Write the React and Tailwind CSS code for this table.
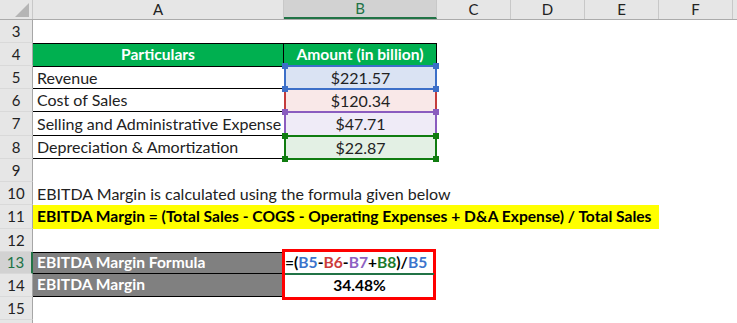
import React from "react";

const F = "font-['Lato',sans-serif]";

function RowHdr({ n, h, active }) {
  return (
    <div
      className={`${h} w-[33px] shrink-0 flex items-center justify-center text-[15px] border-b border-[#d9d9d9] ${
        active
          ? "bg-[#d2d2d2] text-[#217346] border-r-2 border-r-[#217346]"
          : "bg-[#e6e6e6] text-[#222] border-r border-r-[#a6a6a6]"
      }`}
    >
      {n}
    </div>
  );
}

function Sq({ pos, color }) {
  return <div className={`absolute w-[6px] h-[6px] ${color} ${pos}`} />;
}

function Range({ border, sq, z, children, bg }) {
  return (
    <div className={`relative w-[153px] shrink-0 h-full ${bg} ${z} flex items-center justify-center text-[16px] text-[#222]`}>
      <div className={`absolute -top-px -bottom-px left-0 right-0 border-2 ${border}`} />
      <Sq pos="-left-[2px] -top-[3px]" color={sq} />
      <Sq pos="-right-[2px] -top-[3px]" color={sq} />
      <Sq pos="-left-[2px] -bottom-[3px]" color={sq} />
      <Sq pos="-right-[2px] -bottom-[3px]" color={sq} />
      <span className="relative">{children}</span>
    </div>
  );
}

function Row({ n, h, active, children }) {
  return (
    <div className={`flex ${h} relative`}>
      <RowHdr n={n} h={h} active={active} />
      {children}
    </div>
  );
}

export default function App() {
  return (
    <div className={`w-[737px] h-[323px] overflow-hidden bg-white ${F} text-[#111]`}>
      {/* column header */}
      <div className="flex h-[20px] bg-[#e6e6e6] border-b border-[#ababab]">
        <div className="w-[33px] shrink-0 relative border-r border-[#c8c8c8]">
          <svg width="33" height="20" className="absolute inset-0">
            <polygon points="29,3 29,17 15,17" fill="#b5b5b5" />
          </svg>
        </div>
        <div className="w-[251px] shrink-0 flex items-center justify-center text-[15px] text-[#222] border-r border-[#c8c8c8]">A</div>
        <div className="w-[153px] shrink-0 flex items-center justify-center text-[15px] text-[#217346] bg-[#d2d2d2] border-b-2 border-[#217346] border-r border-r-[#c8c8c8]">B</div>
        <div className="w-[74px] shrink-0 flex items-center justify-center text-[15px] text-[#222] border-r border-[#c8c8c8]">C</div>
        <div className="w-[74px] shrink-0 flex items-center justify-center text-[15px] text-[#222] border-r border-[#c8c8c8]">D</div>
        <div className="w-[74px] shrink-0 flex items-center justify-center text-[15px] text-[#222] border-r border-[#c8c8c8]">E</div>
        <div className="w-[74px] shrink-0 flex items-center justify-center text-[15px] text-[#222] border-r border-[#c8c8c8]">F</div>
        <div className="flex-1" />
      </div>

      <Row n="3" h="h-[23px]" />

      <Row n="4" h="h-[23px]">
        <div className="w-[251px] shrink-0 bg-[#00b050] border-t border-black border-r flex items-center justify-center text-white font-bold text-[15.6px]">
          Particulars
        </div>
        <div className="w-[153px] shrink-0 bg-[#00b050] border-t border-black border-r flex items-center justify-center text-white font-bold text-[15.6px]">
          Amount (in billion)
        </div>
      </Row>

      <Row n="5" h="h-[23px]">
        <div className="w-[251px] shrink-0 border-t border-b border-black flex items-center pl-[4px] text-[16px] text-[#222]">Revenue</div>
        <Range border="border-[#3c6fc8]" sq="bg-[#3c6fc8]" z="z-30" bg="bg-[#dae3f3]">$221.57</Range>
      </Row>

      <Row n="6" h="h-[23px]">
        <div className="w-[251px] shrink-0 border-b border-black flex items-center pl-[4px] text-[16px] text-[#222]">Cost of Sales</div>
        <Range border="border-[#c43c3c]" sq="bg-transparent" z="z-10" bg="bg-[#f9e8e8]">$120.34</Range>
      </Row>

      <Row n="7" h="h-[24px]">
        <div className="w-[251px] shrink-0 border-b border-black flex items-center pl-[4px] text-[16px] text-[#222] whitespace-nowrap">Selling and Administrative Expense</div>
        <Range border="border-[#8a5cbf]" sq="bg-[#8a5cbf]" z="z-20" bg="bg-[#efebf7]">$47.71</Range>
      </Row>

      <Row n="8" h="h-[23px]">
        <div className="w-[251px] shrink-0 border-b border-black flex items-center pl-[4px] text-[16px] text-[#222]">Depreciation &amp; Amortization</div>
        <Range border="border-[#107c10]" sq="bg-[#107c10]" z="z-30" bg="bg-[#e3f0e4]">$22.87</Range>
      </Row>

      <Row n="9" h="h-[23px]" />

      <Row n="10" h="h-[23px]">
        <div className="flex items-center pl-[4px] text-[16px] text-[#222] whitespace-nowrap">
          EBITDA Margin is calculated using the formula given below
        </div>
      </Row>

      <Row n="11" h="h-[24px]">
        <div className="w-[626px] shrink-0 bg-[#ffff00] flex items-center pl-[4px] text-[15.6px] font-bold text-black whitespace-nowrap">
          EBITDA Margin = (Total Sales - COGS - Operating Expenses + D&amp;A Expense) / Total Sales
        </div>
      </Row>

      <Row n="12" h="h-[23px]" />

      <Row n="13" h="h-[22px]" active>
        <div className="w-[249px] shrink-0 bg-[#808080] border-t border-b border-black flex items-center pl-[4px] text-[15.6px] font-bold text-white">
          EBITDA Margin Formula
        </div>
        <div className="w-[155px] shrink-0 relative z-10 flex items-center pl-[3px] text-[15.6px] font-bold">
          <div className="absolute -top-[3px] left-0 right-[1px] h-[51px] border-[3px] border-[#ff0000]" />
          <div className="absolute bottom-[-1px] left-[3px] right-[3px] h-[2px] bg-[#217346]" />
          <span className="text-black">=(</span>
          <span className="text-[#3c74cc]">B5</span>
          <span className="text-black">-</span>
          <span className="text-[#cc3c3c]">B6</span>
          <span className="text-black">-</span>
          <span className="text-[#8d62c2]">B7</span>
          <span className="text-black">+</span>
          <span className="text-[#1d7b2c]">B8</span>
          <span className="text-black">)/</span>
          <span className="text-[#3c74cc]">B5</span>
        </div>
      </Row>

      <Row n="14" h="h-[23px]">
        <div className="w-[249px] shrink-0 bg-[#808080] border-b border-black flex items-center pl-[4px] text-[15.6px] font-bold text-white">
          EBITDA Margin
        </div>
        <div className="w-[155px] shrink-0 flex items-center justify-center text-[15.6px] font-bold text-black">
          34.48%
        </div>
      </Row>

      <Row n="15" h="h-[23px]" />
      <Row n="" h="h-[23px]" />
    </div>
  );
}
